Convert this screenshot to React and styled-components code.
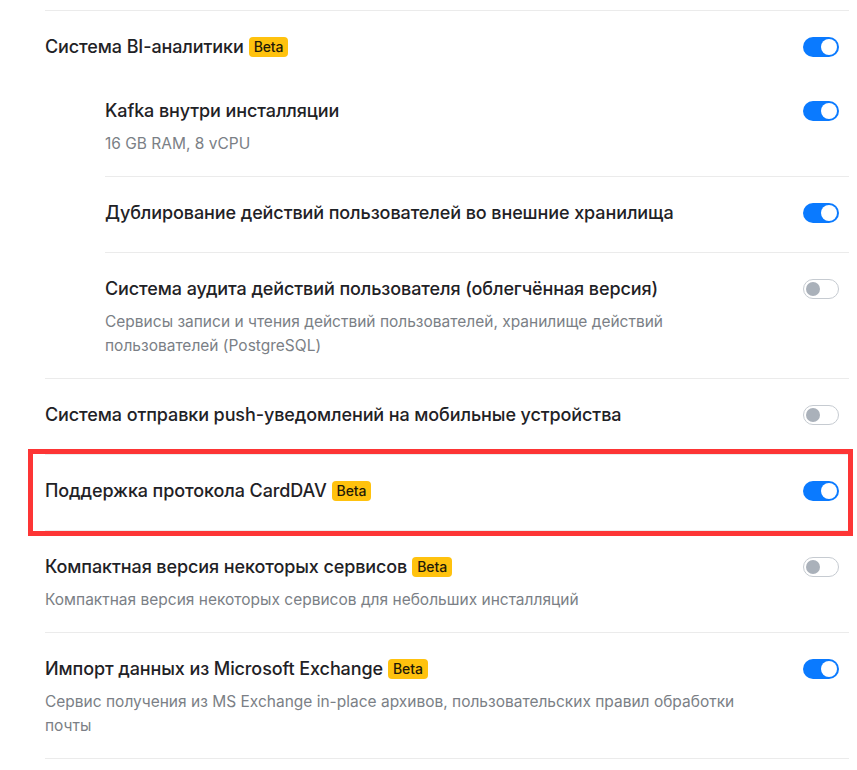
import React from 'react';
import styled, { createGlobalStyle } from 'styled-components';

const COLORS = {
    text: '#1f2226',
    muted: '#7b7f86',
    divider: '#ebebeb',
    blue: '#0a7aff',
    beta: '#ffc20e',
    offBorder: '#c6cbd1',
    offKnob: '#aab1ba',
    mark: '#fd3535',
};

const services = [
    {
        title: 'Система BI-аналитики',
        beta: true,
        on: true,
        children: [
            { title: 'Kafka внутри инсталляции', description: '16 GB RAM, 8 vCPU', on: true },
            { title: 'Дублирование действий пользователей во внешние хранилища', on: true },
            {
                title: 'Система аудита действий пользователя (облегчённая версия)',
                description: 'Сервисы записи и чтения действий пользователей, хранилище действий пользователей (PostgreSQL)',
                on: false,
            },
        ],
    },
    { title: 'Система отправки push-уведомлений на мобильные устройства', on: false },
    { title: 'Поддержка протокола CardDAV', beta: true, on: true, marked: true },
    {
        title: 'Компактная версия некоторых сервисов',
        beta: true,
        on: false,
        description: 'Компактная версия некоторых сервисов для небольших инсталляций',
    },
    {
        title: 'Импорт данных из Microsoft Exchange',
        beta: true,
        on: true,
        description: 'Сервис получения из MS Exchange in-place архивов, пользовательских правил обработки почты',
    },
];

const ServiceRow = ({ item, nested }) => {
    const hasChildren = item.children && item.children.length > 0;
    return (
        <Row $nested={nested} $marked={item.marked} $withText={!!item.description} $parent={hasChildren}>
            <RowHead>
                <TextCol>
                    <Title>
                        {item.title}
                        {item.beta && <Badge>Beta</Badge>}
                    </Title>
                    {item.description && <Description>{item.description}</Description>}
                </TextCol>
                <Toggle $on={item.on} />
            </RowHead>
            {hasChildren && (
                <SubList>
                    {item.children.map((child, idx) => (
                        <ServiceRow key={`child-${idx}`} item={child} nested />
                    ))}
                </SubList>
            )}
        </Row>
    );
};

const App = () => {
    return (
        <>
            <GlobalStyle />
            <Page>
                <List>
                    {services.map((item, idx) => (
                        <ServiceRow key={`service-${idx}`} item={item} />
                    ))}
                </List>
            </Page>
        </>
    );
};

const GlobalStyle = createGlobalStyle`
    * {
        box-sizing: border-box;
    }

    body {
        margin: 0;
        background: #ffffff;
        font-family: Inter, "Noto Sans", sans-serif;
        color: ${COLORS.text};
    }
`;

const Page = styled.div`
    padding: 10px 8px 0 45px;
`;

const List = styled.ul`
    margin: 0;
    padding: 0;
    list-style: none;
    border-top: 1px solid ${COLORS.divider};
`;

const SubList = styled.ul`
    margin: 15px 0 0 60px;
    padding: 0;
    list-style: none;
`;

const Row = styled.li`
    position: relative;
    padding: 23px 0 ${({ $withText, $parent }) => ($parent ? '0' : $withText ? '20px' : '26px')} 0;
    border-bottom: 1px solid ${COLORS.divider};

    ${({ $nested }) => $nested && `
        &:last-child {
            border-bottom: none;
        }
    `}

    ${({ $marked }) => $marked && `
        &::after {
            content: '';
            position: absolute;
            top: -6px;
            left: -17px;
            right: -4px;
            bottom: -6px;
            border: 5px solid ${COLORS.mark};
            pointer-events: none;
        }
    `}
`;

const RowHead = styled.div`
    display: flex;
    align-items: flex-start;
    justify-content: space-between;
    gap: 56px;
    padding-right: 10px;
`;

const TextCol = styled.div`
    flex: 1;
    min-width: 0;
`;

const Title = styled.div`
    display: flex;
    align-items: center;
    font-size: 18px;
    font-weight: 500;
    line-height: 26px;
    letter-spacing: -0.1px;
    color: ${COLORS.text};
`;

const Badge = styled.span`
    display: inline-flex;
    align-items: center;
    height: 20px;
    margin-left: 5px;
    padding: 0 5px;
    border-radius: 4px;
    background: ${COLORS.beta};
    font-size: 14px;
    font-weight: 500;
    color: #1f1a08;
`;

const Description = styled.p`
    margin: 8px 0 0;
    font-size: 15.5px;
    line-height: 24px;
    color: ${COLORS.muted};
`;

const Toggle = styled.span`
    position: relative;
    flex-shrink: 0;
    width: 36px;
    height: 20px;
    margin-top: 3px;
    border-radius: 10px;
    background: ${({ $on }) => ($on ? COLORS.blue : '#ffffff')};
    border: ${({ $on }) => ($on ? 'none' : `1.5px solid ${COLORS.offBorder}`)};

    &::after {
        content: '';
        position: absolute;
        top: ${({ $on }) => ($on ? '2px' : '1.5px')};
        left: ${({ $on }) => ($on ? '18px' : '1.5px')};
        width: ${({ $on }) => ($on ? '16px' : '14px')};
        height: ${({ $on }) => ($on ? '16px' : '14px')};
        border-radius: 50%;
        background: ${({ $on }) => ($on ? '#ffffff' : COLORS.offKnob)};
    }
`;

export default App;
